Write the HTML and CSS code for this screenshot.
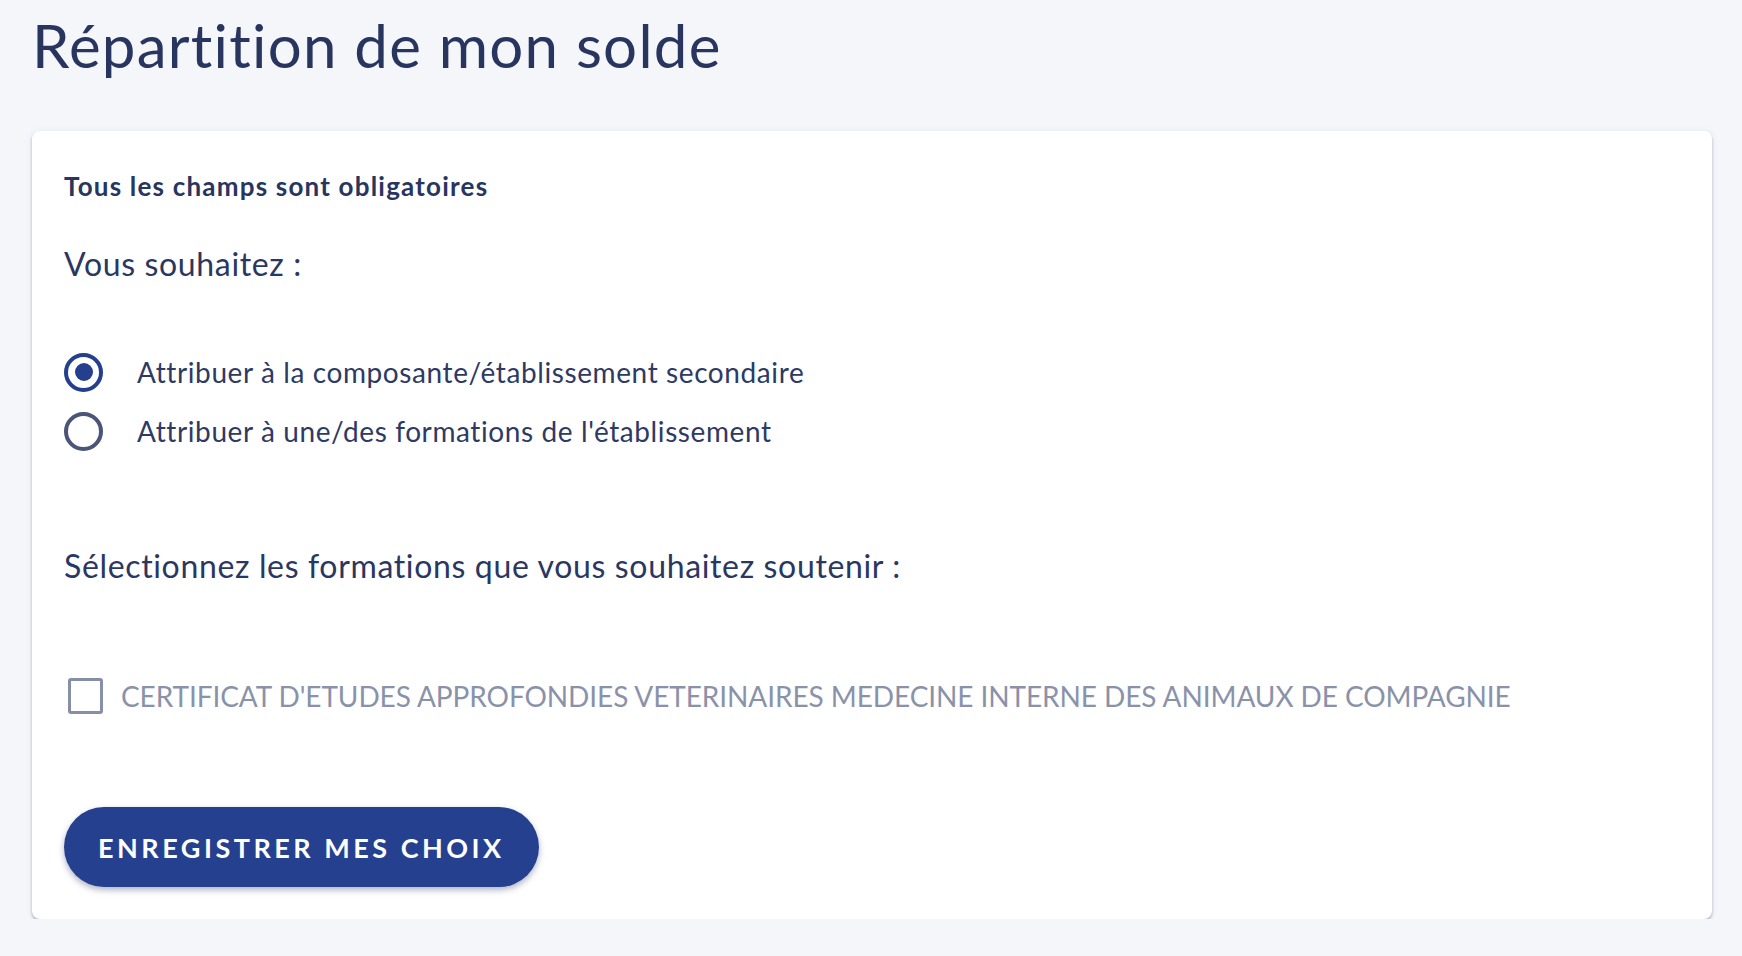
FILE: index.html
```html
<!DOCTYPE html>
<html lang="fr">
<head>
<meta charset="utf-8">
<title>Répartition de mon solde</title>
<link rel="stylesheet" href="styles.css">
</head>
<body>
<main class="page">
  <h1 class="title">Répartition de mon solde</h1>
  <form class="card">
    <p class="required">Tous les champs sont obligatoires</p>
    <p class="question">Vous souhaitez :</p>
    <div class="radios">
      <label class="radio-row">
        <input type="radio" name="choix" class="radio" checked>
        <span class="radio-label">Attribuer à la composante/établissement secondaire</span>
      </label>
      <label class="radio-row">
        <input type="radio" name="choix" class="radio">
        <span class="radio-label">Attribuer à une/des formations de l'établissement</span>
      </label>
    </div>
    <p class="question question-formations">Sélectionnez les formations que vous souhaitez soutenir :</p>
    <label class="check-row">
      <input type="checkbox" class="checkbox" disabled>
      <span class="check-label">CERTIFICAT D'ETUDES APPROFONDIES VETERINAIRES MEDECINE INTERNE DES ANIMAUX DE COMPAGNIE</span>
    </label>
    <div class="actions">
      <button type="button" class="btn">ENREGISTRER MES CHOIX</button>
    </div>
  </form>
</main>
</body>
</html>
```
FILE: styles.css
```css
html, body {
  margin: 0;
  padding: 0;
}

body {
  background: #f5f6fa;
  font-family: "Lato", "Noto Sans", sans-serif;
  color: #2a3761;
}

.page {
  padding: 10px 30px 0 32px;
}

.title {
  margin: 0;
  font-size: 60px;
  line-height: 70px;
  font-weight: 400;
  letter-spacing: 1.25px;
  color: #28355f;
}

.card {
  margin-top: 51px;
  background: #ffffff;
  border-radius: 8px;
  box-shadow: 0 2px 3px rgba(80, 92, 135, 0.45), 0 0 8px rgba(40, 50, 100, 0.05);
  padding: 40px 32px 32px 32px;
  display: flex;
  flex-direction: column;
}

.required {
  margin: 0;
  font-size: 26px;
  line-height: 30px;
  font-weight: 700;
  letter-spacing: 1.2px;
  color: #28355f;
}

.question {
  margin: 45px 0 0 0;
  font-size: 32px;
  line-height: 36px;
  letter-spacing: 0.65px;
  color: #2a3761;
}

.question-formations {
  margin-top: 97px;
}

.radios {
  margin-top: 70px;
  display: flex;
  flex-direction: column;
  gap: 19px;
}

.radio-row {
  display: flex;
  align-items: center;
  gap: 34px;
  height: 40px;
  cursor: pointer;
}

.radio {
  appearance: none;
  -webkit-appearance: none;
  margin: 0;
  width: 39px;
  height: 39px;
  border-radius: 50%;
  border: 4px solid #4a5577;
  box-sizing: border-box;
  display: grid;
  place-items: center;
  flex: none;
}

.radio:checked {
  border-color: #233f8e;
}

.radio:checked::before {
  content: "";
  width: 18px;
  height: 18px;
  border-radius: 50%;
  background: #233f8e;
}

.radio-label {
  font-size: 28px;
  line-height: 40px;
  letter-spacing: 0.6px;
  color: #2e3a64;
}

.check-row {
  margin-top: 92px;
  display: flex;
  align-items: center;
  height: 40px;
  gap: 18px;
  padding-left: 4px;
}

.checkbox {
  appearance: none;
  -webkit-appearance: none;
  margin: 0;
  width: 35px;
  height: 36px;
  border: 3px solid #878fa8;
  border-radius: 3px;
  box-sizing: border-box;
  flex: none;
}

.check-label {
  font-size: 28px;
  line-height: 40px;
  letter-spacing: -0.08px;
  color: #8a92aa;
}

.actions {
  margin-top: 91px;
  display: flex;
}

.btn {
  height: 80px;
  padding: 0 34px;
  border: none;
  border-radius: 40px;
  background: #24408e;
  color: #ffffff;
  font-family: "Lato", "Noto Sans", sans-serif;
  font-size: 27px;
  font-weight: 700;
  letter-spacing: 3.5px;
  box-shadow: 0 3px 6px rgba(30, 40, 90, 0.35);
  cursor: pointer;
}
```
